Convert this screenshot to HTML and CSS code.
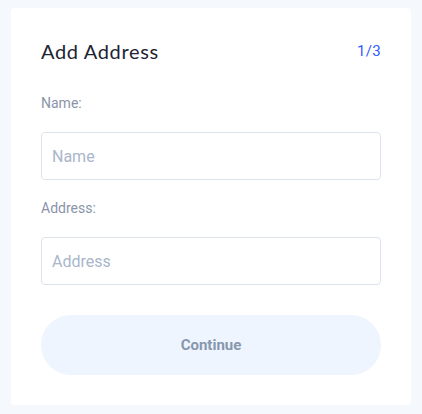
FILE: index.html
```html
<!DOCTYPE html>
<html>
<head>
<meta charset="utf-8">
<link rel="stylesheet" href="styles.css">
</head>
<body>
<div class="card">
  <div class="header">
    <h1 class="title">Add Address</h1>
    <span class="step">1/3</span>
  </div>
  <div class="field">
    <label class="label">Name:</label>
    <div class="input">Name</div>
  </div>
  <div class="field">
    <label class="label">Address:</label>
    <div class="input">Address</div>
  </div>
  <div class="button">Continue</div>
</div>
</body>
</html>
```
FILE: styles.css
```css
html, body {
  margin: 0;
  padding: 0;
}
body {
  background: #f5f8fc;
  font-family: Roboto, "Liberation Sans", sans-serif;
  padding: 8px 11px 9px 11px;
}
.card {
  width: 400px;
  box-sizing: border-box;
  background: #ffffff;
  border-radius: 4px;
  padding: 30px 30px 30px 30px;
  display: flex;
  flex-direction: column;
}
.header {
  display: flex;
  justify-content: space-between;
  align-items: center;
  height: 26px;
  margin-bottom: 29px;
}
.title {
  margin: 0;
  font-family: Lato, "Noto Sans", sans-serif;
  font-weight: 400;
  font-size: 20px;
  line-height: 26px;
  color: #1e2433;
  letter-spacing: 0.65px;
}
.step {
  font-size: 15px;
  color: #2f5bff;
  line-height: 20px;
  letter-spacing: 0.3px;
}
.field {
  display: flex;
  flex-direction: column;
  margin-bottom: 18px;
}
.field + .field {
  margin-bottom: 30px;
}
.label {
  font-size: 14px;
  line-height: 20px;
  color: #8a94a8;
  margin-bottom: 19px;
}
.input {
  height: 48px;
  box-sizing: border-box;
  border: 1px solid #dde3ec;
  border-radius: 4px;
  padding: 0 10px;
  display: flex;
  align-items: center;
  font-size: 16px;
  color: #a9b6cb;
}
.button {
  height: 60px;
  border-radius: 30px;
  background: #eef5fe;
  display: flex;
  align-items: center;
  justify-content: center;
  font-size: 15px;
  font-weight: 700;
  color: #8797ae;
}
```
